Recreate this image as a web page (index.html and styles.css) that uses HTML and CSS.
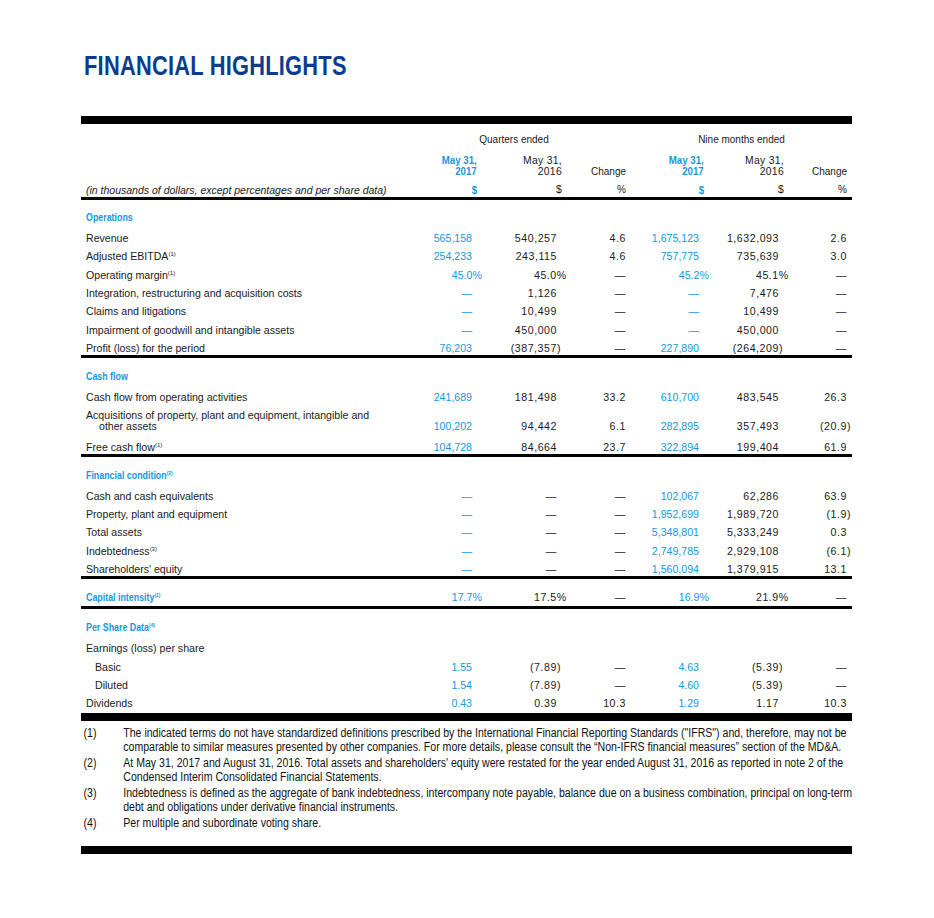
FILE: index.html
```html
<!DOCTYPE html>
<html lang="en">
<head>
<meta charset="utf-8">
<title>Financial Highlights</title>
<link rel="stylesheet" href="styles.css">
</head>
<body>
<div class="page">
  <h1 class="title"><span class="title-text">FINANCIAL HIGHLIGHTS</span></h1>
  <div class="bar"></div>

  <div class="hdr">
    <div class="grid hrow1">
      <div class="grp g1">Quarters ended</div>
      <div class="grp g2">Nine months ended</div>
    </div>
    <div class="grid hrow2">
      <div></div>
      <div class="hd blue"><span class="cb">May 31,<br>2017</span></div>
      <div class="hd">May 31,<br>2016</div>
      <div class="hd chg low">Change</div>
      <div class="hd blue"><span class="cb">May 31,<br>2017</span></div>
      <div class="hd">May 31,<br>2016</div>
      <div class="hd chg low">Change</div>
    </div>
    <div class="grid hrow3">
      <div class="note">(in thousands of dollars, except percentages and per share data)</div>
      <div class="hd blue"><span class="cb">$</span></div>
      <div class="hd">$</div>
      <div class="hd chg">%</div>
      <div class="hd blue"><span class="cb">$</span></div>
      <div class="hd">$</div>
      <div class="hd chg">%</div>
    </div>
  </div>

  <section class="sec">
    <div class="sec-title first"><span class="cond">Operations</span></div>
    <div class="grid row"><div class="lbl">Revenue</div><div class="v b">565,158</div><div class="v k">540,257</div><div class="v k">4.6</div><div class="v b">1,675,123</div><div class="v k">1,632,093</div><div class="v k">2.6</div></div>
    <div class="grid row"><div class="lbl">Adjusted EBITDA<sup>(1)</sup></div><div class="v b">254,233</div><div class="v k">243,115</div><div class="v k">4.6</div><div class="v b">757,775</div><div class="v k">735,639</div><div class="v k">3.0</div></div>
    <div class="grid row"><div class="lbl">Operating margin<sup>(1)</sup></div><div class="v b">45.0<span class="pc">%</span></div><div class="v k">45.0<span class="pc">%</span></div><div class="v k">—</div><div class="v b">45.2<span class="pc">%</span></div><div class="v k">45.1<span class="pc">%</span></div><div class="v k">—</div></div>
    <div class="grid row"><div class="lbl">Integration, restructuring and acquisition costs</div><div class="v b">—</div><div class="v k">1,126</div><div class="v k">—</div><div class="v b">—</div><div class="v k">7,476</div><div class="v k">—</div></div>
    <div class="grid row"><div class="lbl">Claims and litigations</div><div class="v b">—</div><div class="v k">10,499</div><div class="v k">—</div><div class="v b">—</div><div class="v k">10,499</div><div class="v k">—</div></div>
    <div class="grid row"><div class="lbl">Impairment of goodwill and intangible assets</div><div class="v b">—</div><div class="v k">450,000</div><div class="v k">—</div><div class="v b">—</div><div class="v k">450,000</div><div class="v k">—</div></div>
    <div class="grid row last"><div class="lbl">Profit (loss) for the period</div><div class="v b">76,203</div><div class="v k">(387,357<span class="hp">)</span></div><div class="v k">—</div><div class="v b">227,890</div><div class="v k">(264,209<span class="hp">)</span></div><div class="v k">—</div></div>
  </section>

  <section class="sec">
    <div class="sec-title"><span class="cond">Cash flow</span></div>
    <div class="grid row"><div class="lbl">Cash flow from operating activities</div><div class="v b">241,689</div><div class="v k">181,498</div><div class="v k">33.2</div><div class="v b">610,700</div><div class="v k">483,545</div><div class="v k">26.3</div></div>
    <div class="grid row tall"><div class="lbl">Acquisitions of property, plant and equipment, intangible and<br><span class="ind2">other assets</span></div><div class="v b">100,202</div><div class="v k">94,442</div><div class="v k">6.1</div><div class="v b">282,895</div><div class="v k">357,493</div><div class="v k">(20.9<span class="hp">)</span></div></div>
    <div class="grid row last"><div class="lbl">Free cash flow<sup>(1)</sup></div><div class="v b">104,728</div><div class="v k">84,664</div><div class="v k">23.7</div><div class="v b">322,894</div><div class="v k">199,404</div><div class="v k">61.9</div></div>
  </section>

  <section class="sec">
    <div class="sec-title"><span class="cond">Financial condition<sup>(2)</sup></span></div>
    <div class="grid row"><div class="lbl">Cash and cash equivalents</div><div class="v b">—</div><div class="v k">—</div><div class="v k">—</div><div class="v b">102,067</div><div class="v k">62,286</div><div class="v k">63.9</div></div>
    <div class="grid row"><div class="lbl">Property, plant and equipment</div><div class="v b">—</div><div class="v k">—</div><div class="v k">—</div><div class="v b">1,952,699</div><div class="v k">1,989,720</div><div class="v k">(1.9<span class="hp">)</span></div></div>
    <div class="grid row"><div class="lbl">Total assets</div><div class="v b">—</div><div class="v k">—</div><div class="v k">—</div><div class="v b">5,348,801</div><div class="v k">5,333,249</div><div class="v k">0.3</div></div>
    <div class="grid row"><div class="lbl">Indebtedness<sup>(3)</sup></div><div class="v b">—</div><div class="v k">—</div><div class="v k">—</div><div class="v b">2,749,785</div><div class="v k">2,929,108</div><div class="v k">(6.1<span class="hp">)</span></div></div>
    <div class="grid row last"><div class="lbl">Shareholders' equity</div><div class="v b">—</div><div class="v k">—</div><div class="v k">—</div><div class="v b">1,560,094</div><div class="v k">1,379,915</div><div class="v k">13.1</div></div>
  </section>

  <section class="sec cap">
    <div class="grid row"><div class="lbl sec-name"><span class="cond">Capital intensity<sup>(1)</sup></span></div><div class="v b">17.7<span class="pc">%</span></div><div class="v k">17.5<span class="pc">%</span></div><div class="v k">—</div><div class="v b">16.9<span class="pc">%</span></div><div class="v k">21.9<span class="pc">%</span></div><div class="v k">—</div></div>
  </section>

  <section class="sec open">
    <div class="sec-title"><span class="cond">Per Share Data<sup>(4)</sup></span></div>
    <div class="grid row"><div class="lbl">Earnings (loss) per share</div></div>
    <div class="grid row"><div class="lbl ind">Basic</div><div class="v b">1.55</div><div class="v k">(7.89<span class="hp">)</span></div><div class="v k">—</div><div class="v b">4.63</div><div class="v k">(5.39<span class="hp">)</span></div><div class="v k">—</div></div>
    <div class="grid row"><div class="lbl ind">Diluted</div><div class="v b">1.54</div><div class="v k">(7.89<span class="hp">)</span></div><div class="v k">—</div><div class="v b">4.60</div><div class="v k">(5.39<span class="hp">)</span></div><div class="v k">—</div></div>
    <div class="grid row"><div class="lbl">Dividends</div><div class="v b">0.43</div><div class="v k">0.39</div><div class="v k">10.3</div><div class="v b">1.29</div><div class="v k">1.17</div><div class="v k">10.3</div></div>
  </section>

  <div class="bar"></div>

  <ol class="notes">
    <li><span class="num">(1)</span><span class="txt"><span class="ln">The indicated terms do not have standardized definitions prescribed by the International Financial Reporting Standards ("IFRS") and, therefore, may not be</span><span class="ln">comparable to similar measures presented by other companies. For more details, please consult the “Non-IFRS financial measures” section of the MD&amp;A.</span></span></li>
    <li><span class="num">(2)</span><span class="txt"><span class="ln">At May 31, 2017 and August 31, 2016. Total assets and shareholders' equity were restated for the year ended August 31, 2016 as reported in note 2 of the</span><span class="ln">Condensed Interim Consolidated Financial Statements.</span></span></li>
    <li><span class="num">(3)</span><span class="txt"><span class="ln">Indebtedness is defined as the aggregate of bank indebtedness, intercompany note payable, balance due on a business combination, principal on long-term</span><span class="ln">debt and obligations under derivative financial instruments.</span></span></li>
    <li><span class="num">(4)</span><span class="txt"><span class="ln">Per multiple and subordinate voting share.</span></span></li>
  </ol>

  <div class="bar bottom"></div>
</div>
</body>
</html>
```

FILE: styles.css
```css
* { box-sizing: border-box; }

html, body {
  margin: 0;
  padding: 0;
  background: #ffffff;
}

body {
  font-family: "Liberation Sans", Arial, sans-serif;
  color: #1a1a1a;
  font-size: 10.6px;
}

.page {
  width: 771px;
  margin-left: 81px;
  padding-top: 52px;
}

.title {
  margin: 0 0 37px 3px;
  font-family: "Liberation Sans", Arial, sans-serif;
  font-weight: 700;
  font-size: 28px;
  line-height: 27px;
  color: #0b3d8e;
  white-space: nowrap;
}

.title-text {
  display: inline-block;
  transform: scaleX(0.78);
  transform-origin: left center;
  letter-spacing: 0.3px;
}

.bar {
  height: 8px;
  background: #000;
}

.grid {
  display: grid;
  grid-template-columns: 316px 80px 85px 69px 73px 80px 68px;
}

/* header */
.hdr {
  padding-top: 10px;
  padding-bottom: 1px;
  border-bottom: 3px solid #000;
}

.hrow1 {
  line-height: 12px;
  font-size: 10px;
}

.g1 { grid-column: 2 / span 3; text-align: center; }
.g2 { grid-column: 5 / span 3; text-align: center; }

.hrow2 {
  margin-top: 9px;
  line-height: 11px;
  font-size: 10.4px;
}

.hrow3 {
  margin-top: 7px;
  line-height: 12px;
  font-size: 10.4px;
}

.hd {
  text-align: right;
  padding-right: 0;
  letter-spacing: 0.3px;
}

.hd.chg {
  padding-right: 5px;
  letter-spacing: 0;
  font-size: 10px;
}

.hd.low {
  padding-top: 11px;
}

.hd.blue {
  color: #1597de;
  font-weight: 700;
  font-size: 11px;
  letter-spacing: 0;
}

.cb {
  display: inline-block;
  transform: scaleX(0.88);
  transform-origin: right center;
}

.note {
  padding-left: 5px;
  font-style: italic;
  font-size: 10.5px;
}

/* sections */
.sec {
  border-bottom: 3px solid #000;
}

.sec.open {
  border-bottom: 0;
}

.sec.cap {
  padding-top: 9px;
}

.sec-title,
.sec-name {
  font-weight: 700;
  color: #1597de;
  font-size: 10.8px;
}

.cond {
  display: inline-block;
  transform: scaleX(0.82);
  transform-origin: left center;
  white-space: nowrap;
}

.sec-title {
  padding: 12px 0 6px 5px;
  line-height: 12px;
}

.sec-title.first {
  padding-top: 11px;
}

.row {
  height: 18.33px;
  line-height: 18.33px;
}

.row.last {
  height: 16px;
}

.row.tall {
  height: 31.5px;
  line-height: 11px;
}

.row.tall > .lbl {
  padding-top: 4px;
}

.row.tall > .v {
  padding-top: 15px;
}

.lbl {
  padding-left: 5px;
  white-space: nowrap;
}

.lbl.ind {
  padding-left: 14px;
}

.ind2 {
  padding-left: 13px;
}

.v {
  text-align: right;
  padding-right: 5px;
  white-space: nowrap;
}

.v.b {
  color: #1597de;
}

.v.k {
  color: #1a1a1a;
  letter-spacing: 0.55px;
}

.pc {
  margin-right: -9.8px;
}

.hp {
  margin-right: -4px;
}

sup {
  font-size: 6px;
  line-height: 0;
  vertical-align: 4px;
  font-weight: 400;
  letter-spacing: 0;
}

.sec-title sup,
.sec-name sup {
  font-weight: 700;
}

/* footnotes */
.notes {
  list-style: none;
  margin: 0;
  padding: 5px 0 0 3px;
  display: flex;
  flex-direction: column;
  gap: 2px;
  font-size: 12.5px;
  line-height: 14px;
  color: #111;
  width: 910px;
  transform: scaleX(0.845);
  transform-origin: left top;
}

.notes li {
  display: grid;
  grid-template-columns: 47px 1fr;
}

.ln {
  display: block;
  white-space: nowrap;
}

.bar.bottom {
  margin-top: 16px;
}
```
